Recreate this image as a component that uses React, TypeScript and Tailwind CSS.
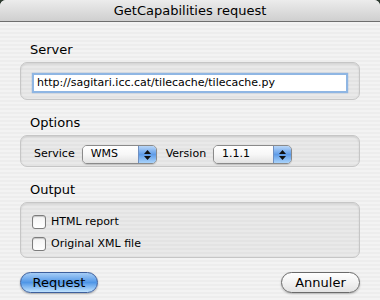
const font = "font-['Lucida_Grande','DejaVu_Sans',sans-serif]";

const Popup = ({ value, width }: { value: string; width: string }) => (
    <div className={`flex h-[19px] ${width} rounded-[5px] border border-[#8a8a8a] overflow-hidden shadow-[0_1px_1px_rgba(0,0,0,0.15)]`}>
        <div className="flex-1 flex items-center pl-[8px] text-[11px] text-black bg-gradient-to-b from-white via-[#f7f7f7] to-[#e2e2e2]">
            {value}
        </div>
        <div className="w-[18px] flex flex-col items-center justify-center gap-[2px] border-l border-[#6f8fc0] bg-gradient-to-b from-[#b9d6f7] via-[#5f9ce8] to-[#a9d3fa]">
            <svg width="7" height="4" viewBox="0 0 7 4"><path d="M3.5 0L7 4H0z" fill="#111" /></svg>
            <svg width="7" height="4" viewBox="0 0 7 4"><path d="M0 0H7L3.5 4z" fill="#111" /></svg>
        </div>
    </div>
);

const Check = ({ label }: { label: string }) => (
    <div className="flex items-center gap-[5px] h-[14px]">
        <div className="w-[14px] h-[14px] rounded-[3px] border border-[#7c7c7c] bg-gradient-to-b from-[#f4f4f4] to-white shadow-[inset_0_1px_1px_rgba(0,0,0,0.2)]" />
        <span className="text-[11px] text-black">{label}</span>
    </div>
);

const Label = ({ text, mt }: { text: string; mt: string }) => (
    <div className={`${mt} pl-[10px] h-[16px] leading-[16px] text-[13px] text-black`}>{text}</div>
);

const Group = ({ children, cls }: { children: React.ReactNode; cls: string }) => (
    <div className={`mt-[4px] rounded-[7px] border border-[#c6c6c6] bg-[rgba(0,0,0,0.04)] shadow-[inset_0_1px_2px_rgba(0,0,0,0.1)] ${cls}`}>
        {children}
    </div>
);

export default function App() {
    return (
        <div className={`w-[380px] h-[300px] bg-[#2d3a30] overflow-hidden ${font}`}>
            <div className="w-full h-full rounded-t-[6px] overflow-hidden flex flex-col bg-[repeating-linear-gradient(to_bottom,#ededed_0px,#ededed_2px,#f3f3f3_2px,#f3f3f3_4px)]">
                {/* Title bar */}
                <div className="h-[22px] shrink-0 flex items-center justify-center border-b border-[#6e6e6e] bg-gradient-to-b from-[#ececec] to-[#cfcfcf] text-[13px] text-black">
                    GetCapabilities request
                </div>

                <div className="px-[20px] flex flex-col">
                    <Label text="Server" mt="mt-[20px]" />
                    <Group cls="h-[38px] px-[11px] pt-[10px]">
                        <div className="h-[20px] border-[2px] border-[#8fb6e3] bg-white flex items-center pl-[3px] text-[11px] text-black shadow-[0_0_1px_rgba(60,120,200,0.6)]">
                            http://sagitari.icc.cat/tilecache/tilecache.py
                        </div>
                    </Group>

                    <Label text="Options" mt="mt-[15px]" />
                    <Group cls="h-[32px] pl-[13px] pt-[9px] flex items-start">
                        <div className="flex items-center h-[19px] gap-[7px]">
                            <span className="text-[11px] text-black">Service</span>
                            <Popup value="WMS" width="w-[75px]" />
                            <span className="ml-[2px] text-[11px] text-black">Version</span>
                            <Popup value="1.1.1" width="w-[79px]" />
                        </div>
                    </Group>

                    <Label text="Output" mt="mt-[15px]" />
                    <Group cls="h-[56px] pl-[11px] pt-[12px] flex flex-col gap-[8px]">
                        <Check label="HTML report" />
                        <Check label="Original XML file" />
                    </Group>

                    <div className="mt-[14px] flex justify-between">
                        <button className="w-[78px] h-[21px] rounded-full border border-[#3d5f9c] bg-gradient-to-b from-[#a6cdf6] via-[#4f96e6] to-[#bfe2fd] text-[13px] text-black shadow-[0_1px_2px_rgba(0,0,0,0.3)]">
                            Request
                        </button>
                        <button className="w-[79px] h-[21px] rounded-full border border-[#6a6a6a] bg-gradient-to-b from-white via-[#f2f2f2] to-[#e2e2e2] text-[13px] text-black shadow-[0_1px_2px_rgba(0,0,0,0.25)]">
                            Annuler
                        </button>
                    </div>
                </div>
            </div>
        </div>
    );
}
